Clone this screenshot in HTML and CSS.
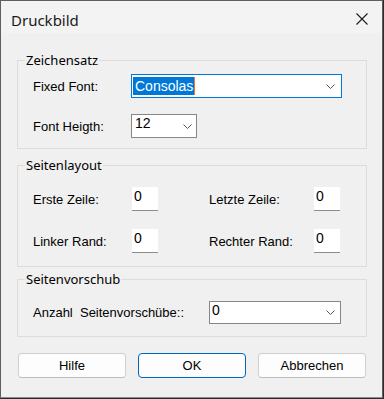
FILE: index.html
```html
<!DOCTYPE html>
<html lang="de">
<head>
<meta charset="utf-8">
<title>Druckbild</title>
<link rel="stylesheet" href="styles.css">
</head>
<body>
<div class="window">
  <div class="titlebar">
    <span class="title">Druckbild</span>
    <svg class="close" width="12" height="12" viewBox="0 0 12 12"><path d="M0.5 0.5L11.5 11.5M11.5 0.5L0.5 11.5" stroke="#1b1b1b" stroke-width="1.1" fill="none"/></svg>
  </div>
  <div class="content">
    <fieldset class="group g1">
      <legend>Zeichensatz</legend>
      <div class="grid grid1">
        <span class="label">Fixed Font:</span>
        <div class="combo focused wide">
          <span class="sel">Consolas</span><span class="caret"></span>
          <svg class="chev" width="9" height="5" viewBox="0 0 9 5"><path d="M0.5 0.5L4.5 4.5L8.5 0.5" stroke="#555" fill="none"/></svg>
        </div>
        <span class="label">Font Heigth:</span>
        <div class="combo small">
          <span class="val">12</span>
          <svg class="chev" width="9" height="5" viewBox="0 0 9 5"><path d="M0.5 0.5L4.5 4.5L8.5 0.5" stroke="#555" fill="none"/></svg>
        </div>
      </div>
    </fieldset>
    <fieldset class="group g2">
      <legend>Seitenlayout</legend>
      <div class="grid grid2">
        <span class="label">Erste Zeile:</span>
        <div class="edit">0</div>
        <span></span>
        <span class="label">Letzte Zeile:</span>
        <div class="edit">0</div>
        <span class="label">Linker Rand:</span>
        <div class="edit">0</div>
        <span></span>
        <span class="label">Rechter Rand:</span>
        <div class="edit">0</div>
      </div>
    </fieldset>
    <fieldset class="group g3">
      <legend>Seitenvorschub</legend>
      <div class="grid grid3">
        <span class="label">Anzahl&nbsp; Seitenvorschübe::</span>
        <div class="combo feed">
          <span class="val">0</span>
          <svg class="chev" width="9" height="5" viewBox="0 0 9 5"><path d="M0.5 0.5L4.5 4.5L8.5 0.5" stroke="#555" fill="none"/></svg>
        </div>
      </div>
    </fieldset>
    <div class="buttons">
      <button class="btn">Hilfe</button>
      <button class="btn default">OK</button>
      <button class="btn">Abbrechen</button>
    </div>
  </div>
</div>
</body>
</html>
```
FILE: styles.css
```css
html, body {
  margin: 0;
  padding: 0;
}
body {
  background: #2b2b2b;
  width: 384px;
  height: 399px;
  overflow: hidden;
}
.window {
  box-sizing: border-box;
  width: 383px;
  height: 398px;
  border: 1px solid #5e5e5e;
  border-bottom-color: #8a8a8a;
  background: #f0f0f0;
  font-family: "Liberation Sans", Arial, sans-serif;
  font-size: 13px;
  color: #000;
}
.titlebar {
  height: 32px;
  background: #f3f3f3;
  display: flex;
  align-items: flex-start;
}
.title {
  font-family: "Noto Sans", "Open Sans", sans-serif;
  font-size: 15px;
  line-height: 20px;
  margin: 9px 0 0 10px;
  color: #1a1a1a;
}
.close {
  margin: 12px 14px 0 auto;
  display: block;
}
.content {
  padding: 19px 15px 0 16px;
}
.group {
  margin: 0;
  padding: 0;
  min-width: 0;
  border: 1px solid #dcdcdc;
}
.group legend {
  font-family: "Noto Sans", "Open Sans", sans-serif;
  font-size: 13px;
  line-height: 17px;
  padding: 0 1px;
  margin-left: 7px;
  color: #000;
}
.g2 { margin-top: 8px; }
.g3 { margin-top: 4px; }
.grid {
  display: grid;
  align-items: center;
}
.grid1 {
  grid-template-columns: 98px auto;
  grid-auto-rows: 24px;
  row-gap: 16px;
  padding: 5px 0 10px 15px;
}
.grid2 {
  grid-template-columns: 99px 26px 51px 105px 26px;
  grid-auto-rows: 24px;
  row-gap: 18px;
  padding: 13px 0 13px 15px;
}
.grid3 {
  grid-template-columns: 176px 132px;
  grid-auto-rows: 23px;
  padding: 13px 0 12px 15px;
}
.label {
  white-space: nowrap;
  line-height: 15px;
}
.combo {
  box-sizing: border-box;
  height: 100%;
  background: #fff;
  border: 1px solid #868686;
  display: flex;
  align-items: flex-start;
  font-size: 14px;
  line-height: 16px;
}
.combo .chev {
  display: block;
  margin-left: auto;
  align-self: center;
}
.focused {
  border-color: #0078d7;
  padding: 1px;
  align-items: center;
}
.wide { width: 211px; }
.wide .chev { margin-right: 5px; }
.sel {
  background: #0078d7;
  color: #fff;
  line-height: 18px;
  padding: 0 1px 0 2px;
}
.caret {
  width: 1px;
  height: 18px;
  background: #e8762b;
}
.small {
  width: 66px;
  padding: 0 0 0 3px;
}
.small .chev { margin-right: 4px; }
.feed {
  width: 132px;
  padding: 0 0 0 2px;
}
.feed .chev { margin-right: 5px; }
.edit {
  box-sizing: border-box;
  height: 100%;
  width: 26px;
  background: #fff;
  border-bottom: 1px solid #8c8c8c;
  padding: 1px 0 0 2px;
  font-size: 14px;
  line-height: 16px;
}
.buttons {
  display: flex;
  gap: 12px;
  margin: 16px 0 0 1px;
}
.btn {
  box-sizing: border-box;
  width: 108px;
  height: 25px;
  padding: 0;
  background: #fdfdfd;
  border: 1px solid #d0d0d0;
  border-bottom-color: #bcbcbc;
  border-radius: 4px;
  font-family: "Liberation Sans", Arial, sans-serif;
  font-size: 13px;
  color: #000;
}
.btn.default {
  border-color: #0067c0;
}
```
